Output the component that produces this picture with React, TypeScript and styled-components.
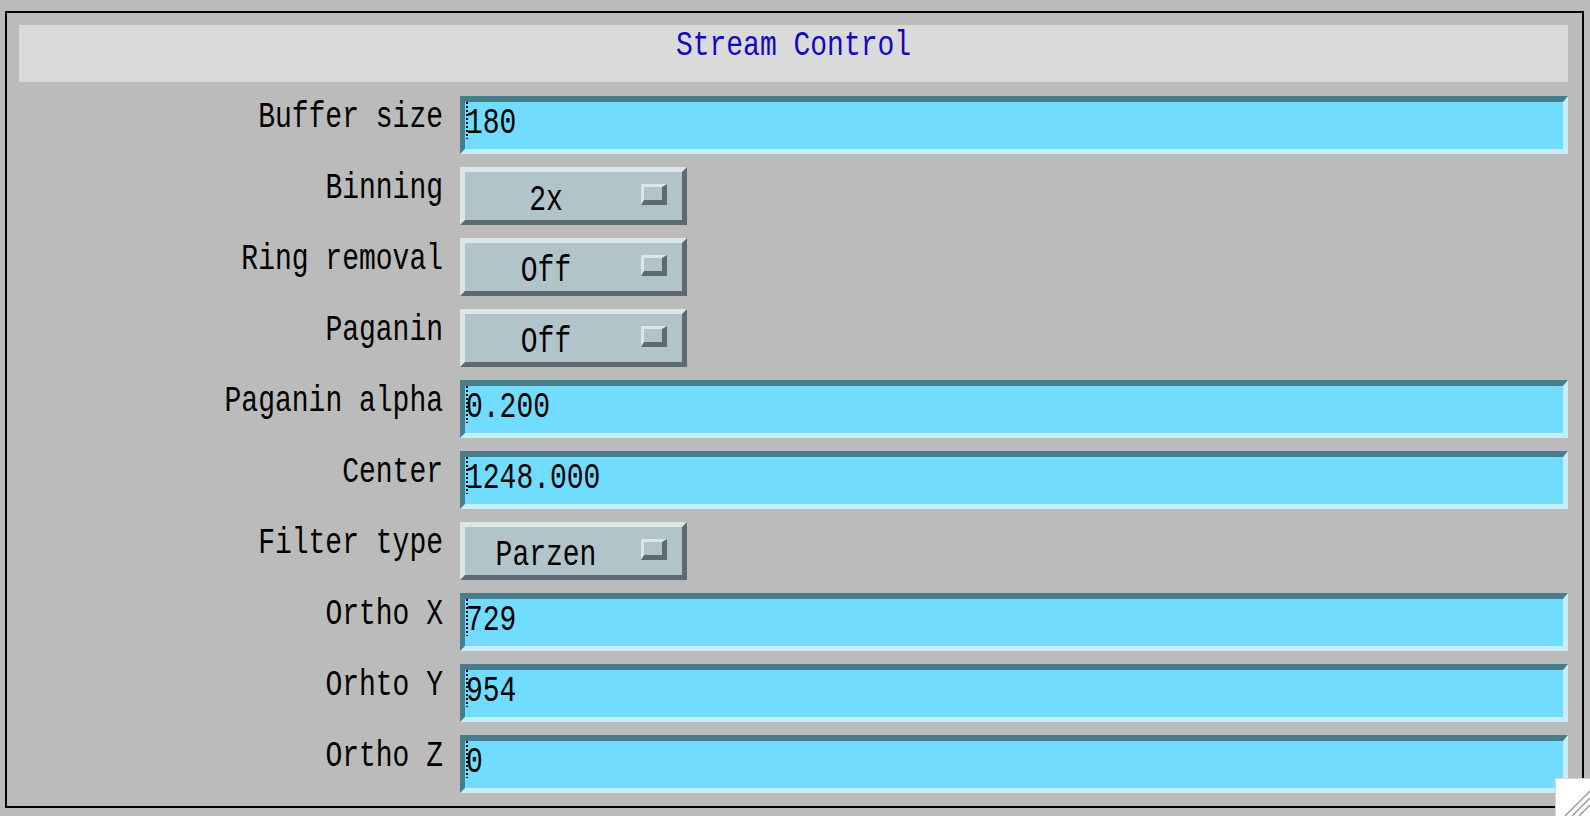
import React from "react";
import styled, { createGlobalStyle } from "styled-components";

const GlobalStyle = createGlobalStyle`
  html, body {
    margin: 0;
    padding: 0;
    background: #bbbbbb;
    font-family: "Liberation Mono", "DejaVu Sans Mono", monospace;
  }
  * { box-sizing: border-box; }
`;

const Page = styled.div`
  width: 1590px;
  height: 816px;
  padding: 11px 6px 8px 5px;
  background: #bbbbbb;
  position: relative;
  overflow: hidden;
`;

const Frame = styled.div`
  border: 2px solid #000;
  height: 797px;
  padding: 12px 14px 13px 12px;
  display: flex;
  flex-direction: column;
  gap: 14px;
`;

const Header = styled.div`
  height: 57px;
  background: #dadada;
  display: flex;
  justify-content: center;
  align-items: flex-start;
  padding-top: 7px;
`;

const Glyphs = styled.span<{ $scale?: number }>`
  display: inline-block;
  font-size: 28px;
  line-height: 28px;
  white-space: pre;
  transform: scaleY(${(p) => p.$scale ?? 1.34});
  transform-origin: center;
`;

const Title = styled(Glyphs)`
  color: #1408c0;
`;

const Form = styled.div`
  display: grid;
  grid-template-columns: 424px 1fr;
  column-gap: 17px;
  row-gap: 13px;
  grid-auto-rows: 58px;
`;

const Label = styled.div`
  text-align: right;
  padding-top: 8px;
  color: #000;
`;

const TextField = styled.div`
  position: relative;
  height: 58px;
  background: #71dcfe;
  border-style: solid;
  border-width: 6px 5px 5px 5px;
  border-color: #487d8d #c6effd #c6effd #487d8d;
  padding: 8px 0 0 1px;
  color: #000;
`;

const Cursor = styled.span`
  position: absolute;
  left: 1px;
  top: 0px;
  width: 2px;
  height: 37px;
  background: repeating-linear-gradient(
    to bottom,
    #000 0 2px,
    transparent 2px 4px
  );
`;

const MenuButton = styled.div`
  width: 227px;
  height: 58px;
  background: #b1c4c9;
  border-style: solid;
  border-width: 5px;
  border-color: #dbe6e8 #5d6b70 #5d6b70 #dbe6e8;
  display: flex;
  align-items: flex-start;
  color: #000;
`;

const MenuText = styled.div`
  flex: 1;
  text-align: center;
  padding-top: 15px;
  padding-right: 14px;
`;

const Indicator = styled.div`
  width: 26px;
  height: 21px;
  margin: 12px 15px 0 0;
  background: #b1c4c9;
  border-style: solid;
  border-width: 3px 5px 5px 3px;
  border-color: #dbe6e8 #5d6b70 #5d6b70 #dbe6e8;
`;

const Grip = styled.svg`
  position: absolute;
  right: 0;
  bottom: 0;
`;

type Row = { label: string; kind: "text" | "menu"; value: string };

const rows: Row[] = [
  { label: "Buffer size", kind: "text", value: "180" },
  { label: "Binning", kind: "menu", value: "2x" },
  { label: "Ring removal", kind: "menu", value: "Off" },
  { label: "Paganin", kind: "menu", value: "Off" },
  { label: "Paganin alpha", kind: "text", value: "0.200" },
  { label: "Center", kind: "text", value: "1248.000" },
  { label: "Filter type", kind: "menu", value: "Parzen" },
  { label: "Ortho X", kind: "text", value: "729" },
  { label: "Orhto Y", kind: "text", value: "954" },
  { label: "Ortho Z", kind: "text", value: "0" },
];

export default function App() {
  return (
    <>
      <GlobalStyle />
      <Page>
        <Frame>
          <Header>
            <Title $scale={1.25}>Stream Control</Title>
          </Header>
          <Form>
            {rows.map((r) => (
              <React.Fragment key={r.label}>
                <Label>
                  <Glyphs>{r.label}</Glyphs>
                </Label>
                {r.kind === "text" ? (
                  <TextField>
                    <Cursor />
                    <Glyphs>{r.value}</Glyphs>
                  </TextField>
                ) : (
                  <div>
                    <MenuButton>
                      <MenuText>
                        <Glyphs>{r.value}</Glyphs>
                      </MenuText>
                      <Indicator />
                    </MenuButton>
                  </div>
                )}
              </React.Fragment>
            ))}
          </Form>
        </Frame>
        <Grip width="35" height="38" viewBox="0 0 35 38">
          <rect x="0" y="0" width="35" height="38" fill="#ffffff" />
          <path d="M0.5 38 V0.5 H35" fill="none" stroke="#d6d6d6" strokeWidth="1" />
          <path d="M10 38 L35 13" stroke="#9a9a9a" strokeWidth="1.5" />
          <path d="M17 38 L35 20" stroke="#9a9a9a" strokeWidth="1.5" />
          <path d="M24 38 L35 27" stroke="#9a9a9a" strokeWidth="1.5" />
        </Grip>
      </Page>
    </>
  );
}
